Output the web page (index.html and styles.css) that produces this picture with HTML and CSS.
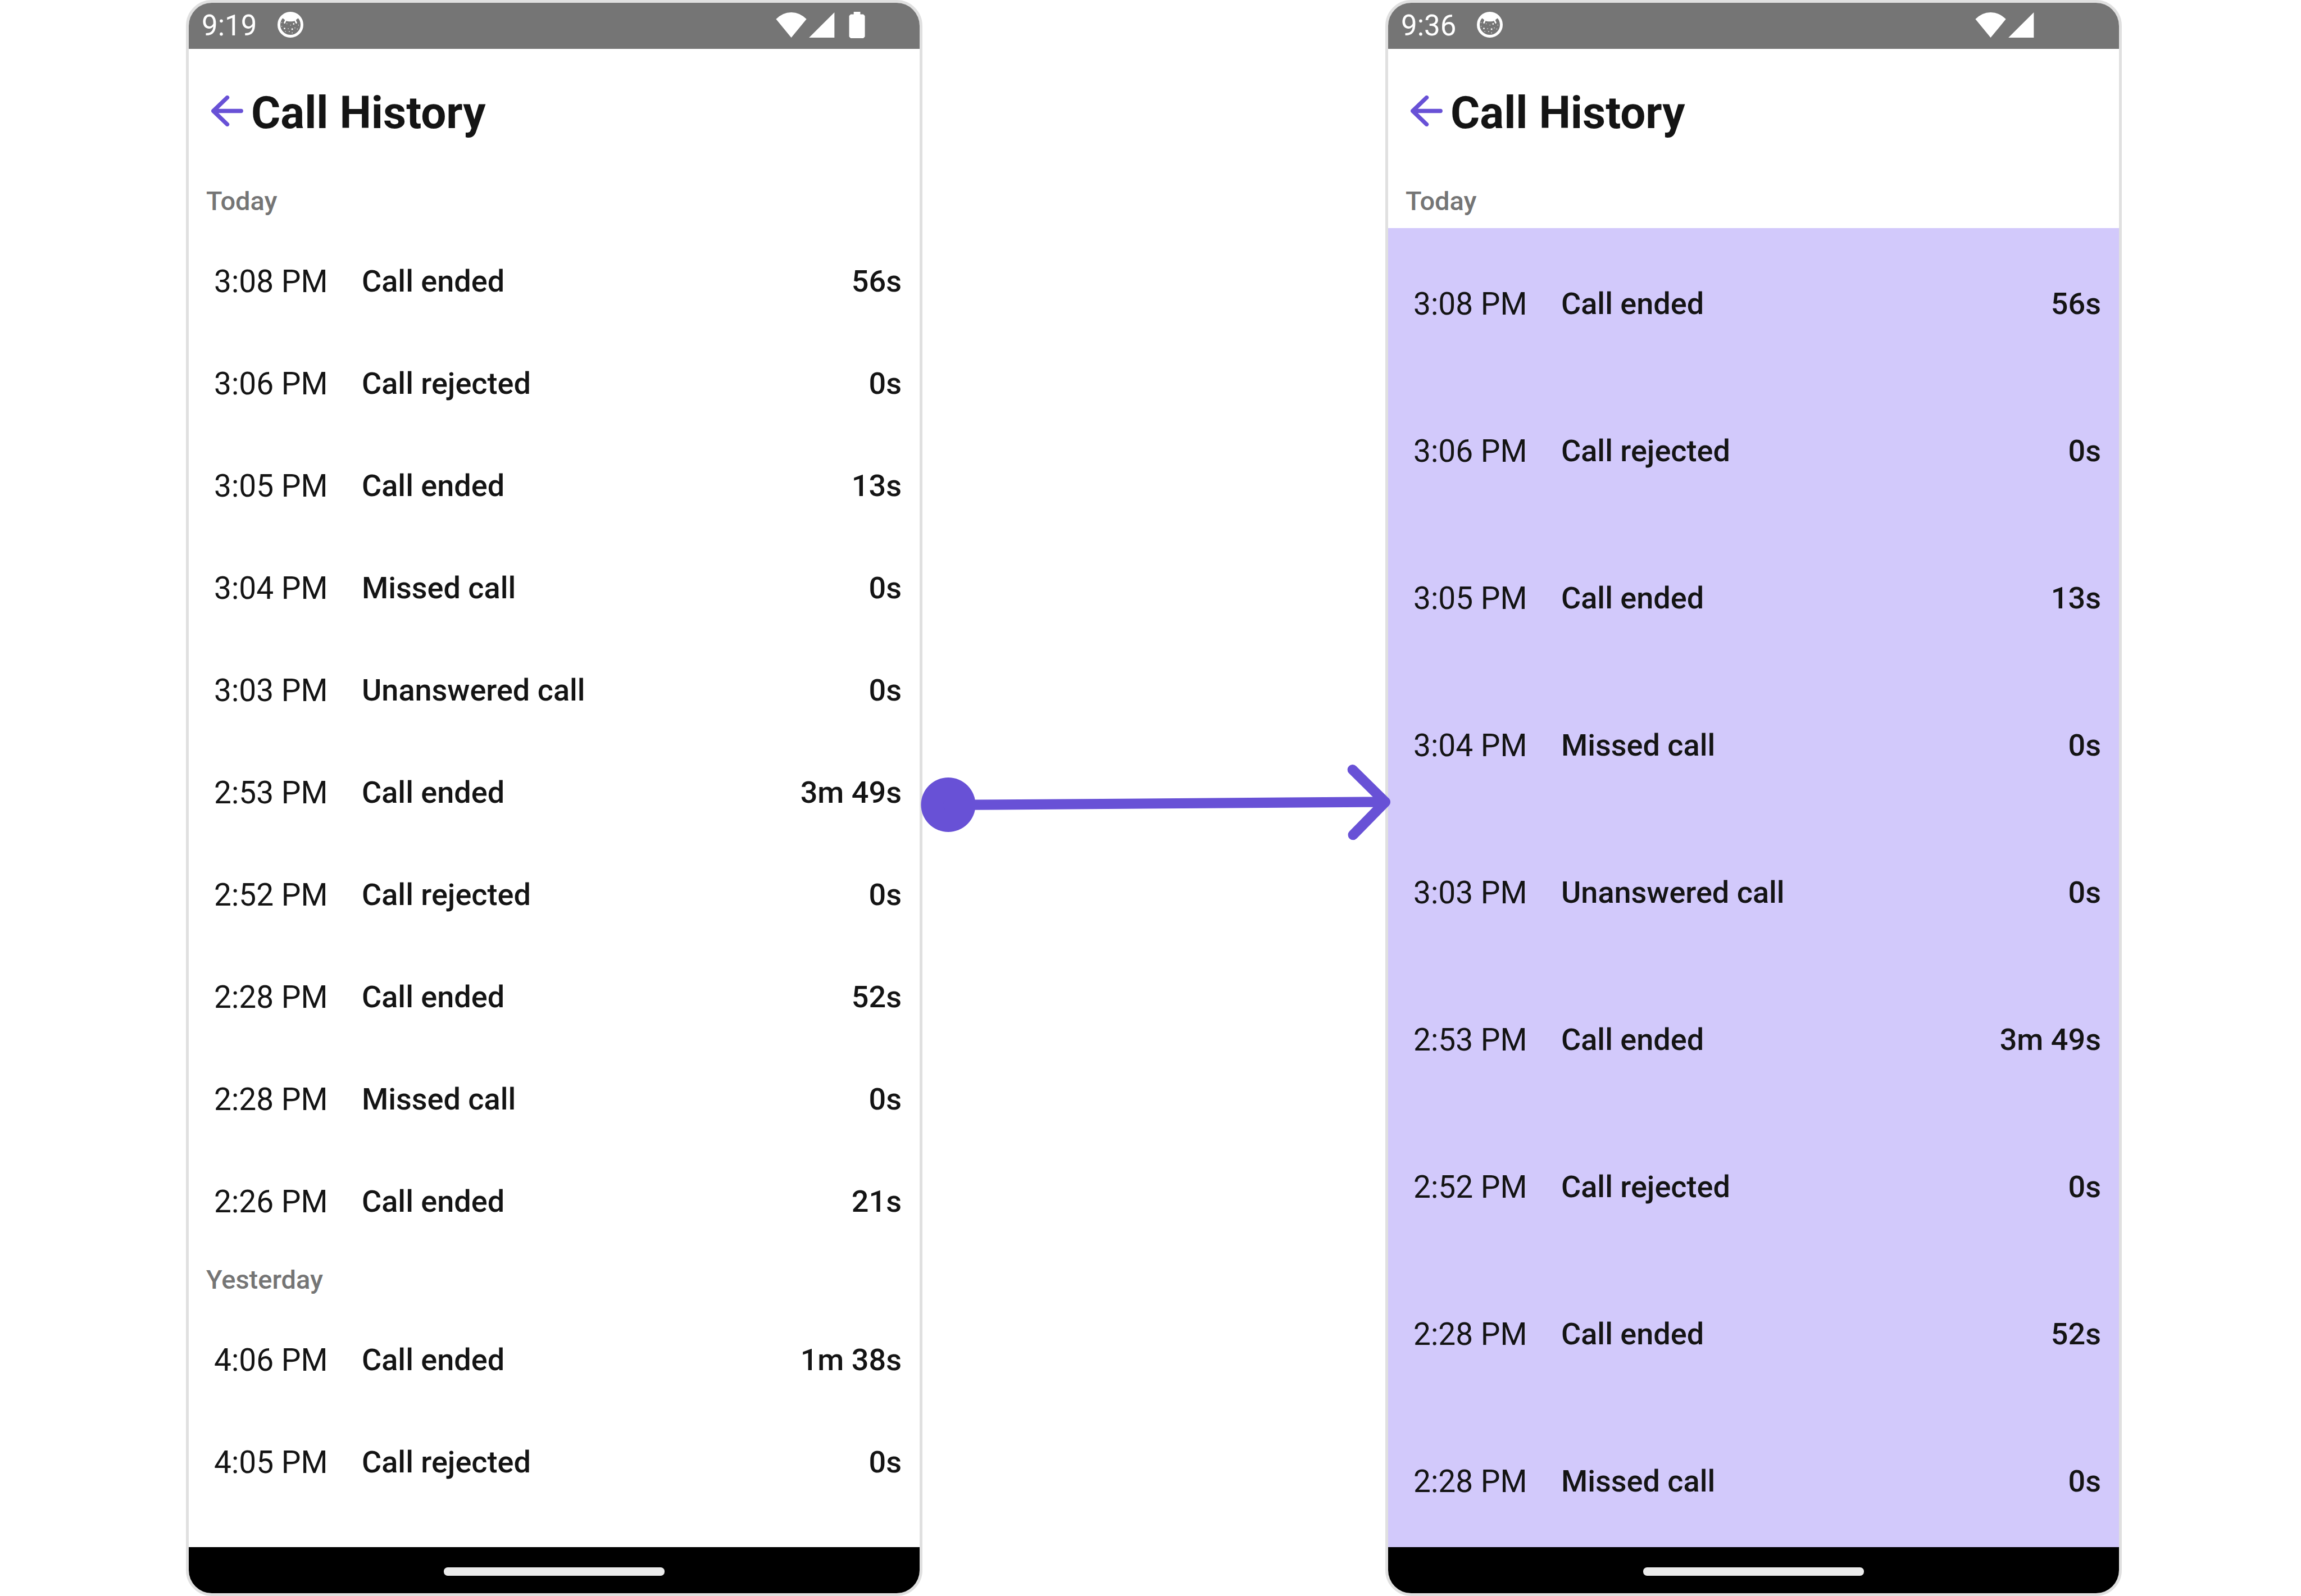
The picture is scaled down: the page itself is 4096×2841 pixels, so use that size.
FILE: index.html
```html
<!DOCTYPE html>
<html lang="en">
<head>
<meta charset="utf-8">
<title>Call History</title>
<link rel="stylesheet" href="styles.css">
</head>
<body>
<svg class="sprite" aria-hidden="true">
  <symbol id="face" viewBox="0 0 50 50">
    <circle cx="25" cy="25" r="22.3" fill="none" stroke="#fff" stroke-width="5.4"/>
    <path d="M8.7 12C12 6 18 2 25 2s13 4 16.300 10c-3 .5-4.500 3.500-7 5-5 2.400-13.600 2.400-18.600 0-2.500-1.500-4-4.500-7-5z" fill="#fff"/>
    <path d="M16 16l-2.300 5.200M34 16l2.300 5.200" stroke="#fff" stroke-width="3" stroke-linecap="round"/>
    <path d="M30 22h2.600v2.600H30zM27 32.200h2.800V35H27zM12.300 31h2.600v2.600h-2.600zM7.500 20.200h1.300v1.300H7.500zM7.500 27.500h1.300v1.300H7.500zM17.500 22.500h1.300v1.300h-1.300zM24.700 25h1.300v1.300h-1.300zM40 25h1.300v1.300H40zM20 32h1.500v1.500H20zM14.800 37.500h1.300v1.300h-1.300zM22 37.500h1.600v1.600H22zM27.700 40h1.500v1.500h-1.500zM33 30.300h1.400v1.400H33zM37.800 32.500h1.400v1.400h-1.400z" fill="#fff"/>
  </symbol>
  <symbol id="back" viewBox="0 0 62 60">
    <path d="M31 4L4 30l27 26M4 30h54" fill="none" stroke="#6851d6" stroke-width="8" stroke-linecap="round" stroke-linejoin="round"/>
  </symbol>
</svg>
<main class="board">
  <section class="phone">
    <div class="status">
      <span class="clock">9:19</span>
      <svg class="face"><use href="#face"/></svg>
      <svg class="signals" viewBox="0 0 175 52">
        <path d="M0 14.500Q13 1 30 1t30 13.500L30 51z M115 1v50H65z M153 5V0h13v5h6l3 3v41l-3 3h-25l-3-3V8l3-3z" fill="#fff"/>
      </svg>
    </div>
    <header class="bar">
      <button class="back" type="button" aria-label="Back"><svg><use href="#back"/></svg></button>
      <h1>Call History</h1>
    </header>
    <div class="log">
      <h2>Today</h2>
      <ul>
        <li><time>3:08 PM</time><span>Call ended</span><span>56s</span></li>
        <li><time>3:06 PM</time><span>Call rejected</span><span>0s</span></li>
        <li><time>3:05 PM</time><span>Call ended</span><span>13s</span></li>
        <li><time>3:04 PM</time><span>Missed call</span><span>0s</span></li>
        <li><time>3:03 PM</time><span>Unanswered call</span><span>0s</span></li>
        <li><time>2:53 PM</time><span>Call ended</span><span>3m 49s</span></li>
        <li><time>2:52 PM</time><span>Call rejected</span><span>0s</span></li>
        <li><time>2:28 PM</time><span>Call ended</span><span>52s</span></li>
        <li><time>2:28 PM</time><span>Missed call</span><span>0s</span></li>
        <li><time>2:26 PM</time><span>Call ended</span><span>21s</span></li>
      </ul>
      <h2>Yesterday</h2>
      <ul>
        <li><time>4:06 PM</time><span>Call ended</span><span>1m 38s</span></li>
        <li><time>4:05 PM</time><span>Call rejected</span><span>0s</span></li>
      </ul>
    </div>
    <div class="nav"><i class="pill"></i></div>
  </section>

  <svg class="connector" viewBox="0 0 905 148" aria-hidden="true">
    <circle cx="50.500" cy="78.500" r="53.300" fill="#6851d6"/>
    <path d="M50 79L905 73M841 10l64 63.300L842 137.500" fill="none" stroke="#6851d6" stroke-width="20" stroke-linecap="round" stroke-linejoin="round"/>
  </svg>

  <section class="phone tinted">
    <div class="status">
      <span class="clock">9:36</span>
      <svg class="face"><use href="#face"/></svg>
      <svg class="signals" viewBox="0 0 175 52">
        <path d="M0 14.500Q13 1 30 1t30 13.500L30 51z M115 1v50H65z" fill="#fff"/>
      </svg>
    </div>
    <header class="bar">
      <button class="back" type="button" aria-label="Back"><svg><use href="#back"/></svg></button>
      <h1>Call History</h1>
    </header>
    <div class="log">
      <h2>Today</h2>
      <ul>
        <li><time>3:08 PM</time><span>Call ended</span><span>56s</span></li>
        <li><time>3:06 PM</time><span>Call rejected</span><span>0s</span></li>
        <li><time>3:05 PM</time><span>Call ended</span><span>13s</span></li>
        <li><time>3:04 PM</time><span>Missed call</span><span>0s</span></li>
        <li><time>3:03 PM</time><span>Unanswered call</span><span>0s</span></li>
        <li><time>2:53 PM</time><span>Call ended</span><span>3m 49s</span></li>
        <li><time>2:52 PM</time><span>Call rejected</span><span>0s</span></li>
        <li><time>2:28 PM</time><span>Call ended</span><span>52s</span></li>
        <li><time>2:28 PM</time><span>Missed call</span><span>0s</span></li>
      </ul>
    </div>
    <div class="nav"><i class="pill"></i></div>
  </section>
</main>
</body>
</html>
```
FILE: styles.css
```css
* {
  box-sizing: border-box;
  margin: 0;
  padding: 0;
}

body {
  background: #fff;
  color: #141414;
  font-family: Roboto, sans-serif;
}

.sprite {
  display: none;
}

.board {
  display: grid;
  grid-template-columns: minmax(0, 1fr) 824px minmax(0, 1fr);
  grid-template-rows: 100vh;
  padding: 0 319px 0 331px;
}

.phone {
  display: flex;
  flex-direction: column;
  overflow: hidden;
  border: 5px solid #e0e0e0;
  border-radius: 46px;
}

.status {
  display: flex;
  flex: none;
  align-items: center;
  height: 82px;
  padding: 0 97px 0 23px;
  background: #757575;
  color: #fff;
}

.clock {
  font-size: 51px;
  line-height: 60px;
}

.face {
  width: 46px;
  height: 46px;
  margin: 0 0 4px 37px;
}

.signals {
  width: 159px;
  height: 47px;
  margin: 0 0 4px auto;
}

.bar {
  display: flex;
  flex: none;
  align-items: center;
  height: 219px;
  padding-left: 40px;
}

.back {
  width: 57px;
  height: 55px;
  margin-top: 2px;
  border: 0;
  background: none;
}

.back svg {
  display: block;
  width: 100%;
  height: 100%;
}

h1 {
  padding: 8px 0 0 14px;
  font-size: 80px;
  font-weight: 700;
  line-height: 94px;
}

.log {
  flex: 1;
  min-height: 0;
  overflow: hidden;
}

h2 {
  height: 100px;
  padding: 25px 31px 0;
  color: #757575;
  font-size: 47px;
  font-weight: 500;
  line-height: 54px;
}

ul {
  list-style: none;
}

li {
  display: grid;
  grid-template-columns: 263px 1fr auto;
  align-items: center;
  height: 182px;
  padding: 8px 32px 0 45px;
  font-size: 54px;
  font-weight: 500;
  line-height: 64px;
}

time {
  font-size: 55px;
  font-weight: 400;
}

.tinted ul {
  background: #d2c9fb;
}

.tinted li {
  height: 262px;
}

.nav {
  display: flex;
  flex: none;
  align-items: center;
  justify-content: center;
  height: 82px;
  padding-top: 4px;
  background: #000;
}

.pill {
  width: 393px;
  height: 15px;
  border-radius: 7px;
  background: #ebebeb;
}

.connector {
  z-index: 1;
  align-self: center;
  width: 100%;
  margin-top: 15px;
  overflow: visible;
}
```
